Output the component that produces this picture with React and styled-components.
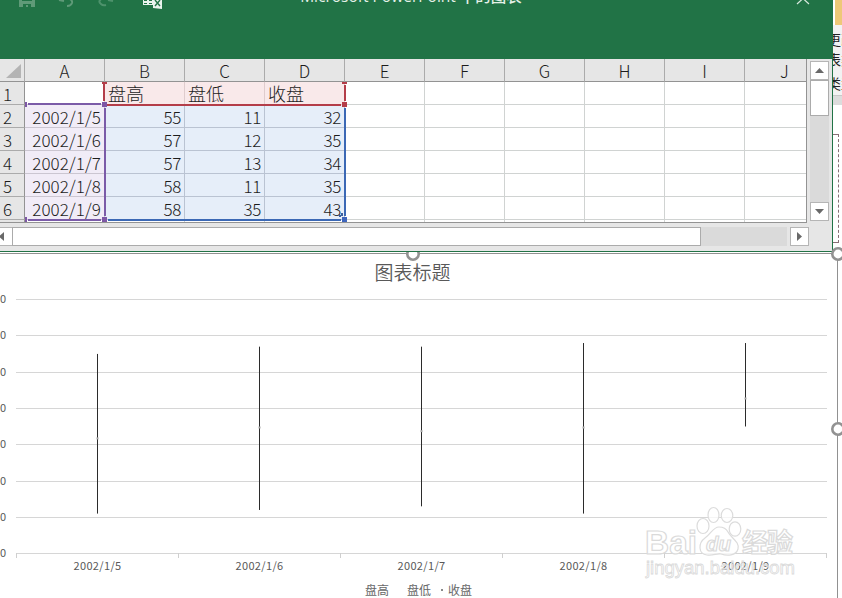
import styled, { createGlobalStyle } from "styled-components";

const GlobalStyle = createGlobalStyle`
  * {
    box-sizing: border-box;
  }

  body {
    margin: 0;
    overflow: hidden;
    background: white;
    font-family: "Noto Sans CJK SC", sans-serif;
  }
`;

const Screen = styled.div`
  display: flex;
  flex-direction: column;
  width: 842px;
  height: 598px;
  overflow: hidden;
  position: relative;
`;

const TopArea = styled.div`
  display: flex;
  height: 252px;
  flex-shrink: 0;
`;

const Workbook = styled.div`
  width: 833px;
  flex-shrink: 0;
  display: flex;
  flex-direction: column;
  background: #e6e6e6;
  border-right: 1px solid #217346;
  border-bottom: 1px solid #217346;
`;

const TitleBar = styled.div`
  height: 59px;
  flex-shrink: 0;
  display: grid;
  grid-template-columns: 170px 482px 1fr;
  background: #217346;
  overflow: hidden;
`;

const WindowTitle = styled.div`
  margin-top: -14px;
  color: #e4f0e8;
  font-family: "Open Sans", "Noto Sans CJK SC", sans-serif;
  font-size: 15.5px;
  font-weight: 500;
  line-height: 20px;
  text-align: center;
  white-space: nowrap;
`;

const SheetArea = styled.div`
  display: flex;
  height: 164px;
`;

const Sheet = styled.div`
  position: relative;
  width: 807px;
  height: 164px;
  overflow: hidden;
  border-right: 1px solid #939393;
  border-bottom: 1px solid #939393;
  background: white;
`;

const SheetRow = styled.div`
  display: grid;
  grid-template-columns: 25px repeat(10, 80px);
  grid-template-rows: 23px;
  height: 23px;
`;

const ColumnHead = styled.div`
  height: 23px;
  border-right: 1px solid ${(props) => (props.$last ? "#e6e6e6" : "#ababab")};
  border-bottom: 1px solid #939393;
  background: #e6e6e6;
  color: #1c1c1c;
  font-size: 17px;
  font-weight: 300;
  line-height: 24px;
  text-align: center;
`;

const Corner = styled(ColumnHead)`
  display: flex;
  justify-content: flex-end;
  padding: 5px 3px 0 0;
`;

const RowHead = styled.div`
  border-right: 1px solid #939393;
  border-bottom: 1px solid #ababab;
  background: #e6e6e6;
  color: #1c1c1c;
  font-size: 17px;
  font-weight: 300;
  line-height: 24px;
  padding-left: 3px;
`;

const fills = {
  none: "white",
  label: "#f9e9ea",
  date: "#f1ecf7",
  value: "#e6eef9",
};

const lines = {
  none: "#d0d3d2",
  label: "#dfcccd",
  date: "#cbc6d1",
  value: "#bac3d2",
};

const spacing = {
  none: 0,
  label: 0,
  date: 0.1,
  value: -0.3,
};

const Cell = styled.div`
  overflow: hidden;
  border-right: 1px solid ${(props) => lines[props.$kind]};
  border-bottom: 1px solid ${(props) => lines[props.$kind]};
  background: ${(props) => fills[props.$kind]};
  color: #1c1c1c;
  font-size: ${(props) => (props.$kind === "label" ? 18 : 17)}px;
  font-weight: 300;
  letter-spacing: ${(props) => spacing[props.$kind]}px;
  line-height: 23px;
  white-space: nowrap;
  text-align: ${(props) => (props.$kind === "label" ? "left" : "right")};
  padding: 0 3px 0 3px;
`;

const Ranges = styled.svg`
  position: absolute;
  top: 0;
  left: 0;
`;

const ScrollColumn = styled.div`
  display: flex;
  flex-direction: column;
  width: 19px;
  height: 160px;
  margin: 2px 0 0 3px;
  background: #dadada;
`;

const ScrollButton = styled.div`
  display: flex;
  align-items: center;
  justify-content: center;
  width: 19px;
  height: 19px;
  flex-shrink: 0;
  border: 1px solid #b5b5b5;
  background: white;
`;

const ScrollRow = styled.div`
  display: flex;
  width: 809px;
  height: 19px;
  margin-top: 4px;
  background: #dadada;
`;

const LeftButton = styled(ScrollButton)`
  width: 12px;
  border-left: 0;
  border-right: 0;
  justify-content: flex-start;
`;

const VerticalThumb = styled.div`
  height: 36px;
  border: 1px solid #ababab;
  background: white;
`;

const HorizontalThumb = styled.div`
  width: 689px;
  border: 1px solid #ababab;
  background: white;
`;

const ScrollGap = styled.div`
  width: ${(props) => props.$width || 19}px;
  height: ${(props) => props.$height || 19}px;
  background: ${(props) => (props.$light ? "#e6e6e6" : "#dadada")};
`;

const SidePane = styled.div`
  flex: 1;
  display: flex;
  flex-direction: column;
  overflow: hidden;
  background: white;
`;

const Swatch = styled.div`
  height: 25px;
  margin-left: 2px;
  flex-shrink: 0;
  background: #eec877;
`;

const RibbonPart = styled.div`
  height: 70px;
  flex-shrink: 0;
  padding-top: 4px;
  background: #f2f2f2;
`;

const RibbonText = styled.div`
  width: 28px;
  height: ${(props) => props.$height}px;
  margin-left: -6px;
  color: #222;
  font-size: 14px;
  line-height: 20px;
  white-space: nowrap;
`;

const RibbonEdge = styled.div`
  height: 10px;
  flex-shrink: 0;
  background: #dcdcdc;
  border-top: 1px solid #c8c8c8;
`;

const Placeholder = styled.div`
  width: 6px;
  height: 109px;
  margin-top: 29px;
  border: 1px dashed #886f76;
  border-left: 0;
`;

const ChartFrame = styled.div`
  flex: 1;
  display: flex;
  flex-direction: column;
  width: 838px;
  margin-top: 1px;
  border-top: 1px solid #919191;
  border-right: 1px solid #919191;
`;

const ChartTitle = styled.div`
  width: 825px;
  height: 37px;
  color: #595959;
  font-size: 19px;
  font-weight: 350;
  line-height: 35px;
  text-align: center;
`;

const Plot = styled.svg`
  display: block;
  flex-shrink: 0;
`;

const Legend = styled.div`
  display: flex;
  height: 20px;
  padding-left: 365px;
  color: #686868;
  font-size: 12px;
  line-height: 18px;
`;

const LegendItem = styled.div`
  display: flex;
  align-items: center;
  gap: 5px;
  width: ${(props) => props.$width}px;
  white-space: nowrap;
`;

const CloseMarker = styled.i`
  width: 2px;
  height: 2px;
  background: #8a8a8a;
`;

const Overlay = styled.svg`
  position: absolute;
  left: ${(props) => props.$left}px;
  top: ${(props) => props.$top}px;
`;

const columns = ["A", "B", "C", "D", "E", "F", "G", "H", "I", "J"];

const rows = [
  ["", "盘高", "盘低", "收盘"],
  ["2002/1/5", 55, 11, 32],
  ["2002/1/6", 57, 12, 35],
  ["2002/1/7", 57, 13, 34],
  ["2002/1/8", 58, 11, 35],
  ["2002/1/9", 58, 35, 43],
];

const cellKind = (row, column) => {
  if (row > 5 || column > 3) return "none";
  if (row === 0) return column === 0 ? "none" : "label";
  return column === 0 ? "date" : "value";
};

const QuickAccess = () => (
  <svg width="170" height="12" fill="none">
    <path d="M19 0H35V7H19Z" fill="#5f9a78" />
    <path d="M22 0H32V1H22ZM23 4H31V7H28V5H26V7H23Z" fill="#217346" />
    <path d="M59 0L64 1M66 -2Q73 -1 72 3Q71 6 67 6" stroke="#5f9a78" strokeWidth="2" />
    <path d="M108 0L113 1M103 -2Q97 1 101 4Q103 6 106 5" stroke="#4e926c" strokeWidth="2" />
    <path d="M143 0H153V5H143Z" fill="#e9f3ed" />
    <path d="M144 0H147V1H144ZM149 0H152V1H149ZM144 3H147V4H144ZM149 3H152V4H149Z" fill="#217346" />
    <path d="M153 -2H162V9L153 8Z" fill="#e9f3ed" />
    <path d="M155 0L160 6M160 0L155 6" stroke="#217346" strokeWidth="1.4" />
  </svg>
);

const SelectionRanges = () => (
  <Ranges width="806" height="163">
    <g fill="none" strokeWidth="2">
      <path d="M104 24V42M106 46H341M345 26V42" stroke="#b43d49" />
      <path d="M28 45H101M105 49V157M28 161H101" stroke="#7b5ba8" />
      <path d="M108 161H341M345 49V157" stroke="#3b68b5" />
    </g>
    <path d="M102 23H107V25H102ZM342 23H347V25H342ZM342 43H347V48H342Z" fill="#b43d49" />
    <path d="M25 43H27V48H25ZM102 43H107V48H102ZM25 158H27V163H25ZM102 158H107V163H102Z" fill="#7e57a5" />
    <path d="M342 158H347V163H342Z" fill="#3d65bd" />
    <path d="M341 154H343V157H341ZM339 156H341V158H339Z" fill="#3b5f9d" />
  </Ranges>
);

const StockChart = () => {
  const toY = (value) => 262.5 - value * 3.6286;
  return (
    <Plot width="836" height="289" fontFamily="Noto Sans CJK SC, sans-serif" fontSize="11" fill="#595959">
      {[0, 10, 20, 30, 40, 50, 60, 70].map((tick) => {
        const y = Math.floor(toY(tick) + 0.1) + 0.5;
        return (
          <g key={tick}>
            <path d={`M16 ${y}H827`} stroke="#d6d6d6" />
            <text x="6" y={y + 3.500} textAnchor="end">
              {tick}
            </text>
          </g>
        );
      })}
      {[16, 178, 340, 502, 664, 826].map((x) => (
        <path key={x} d={`M${x + 0.5} 262V267`} stroke="#cfcfcf" />
      ))}
      {rows.slice(1).map(([date, high, low, close], index) => {
        const x = 97.5 + index * 162;
        return (
          <g key={date}>
            <path d={`M${x} ${toY(high)}V${toY(low)}`} stroke="#2b2b2b" />
            <rect x={x - 1} y={toY(close)} width="2" height="2" fill="#a5a5a5" />
            <text x={x} y="279" textAnchor="middle" letterSpacing="0.35">
              {date}
            </text>
          </g>
        );
      })}
    </Plot>
  );
};

const Handle = ({ x, y }) => (
  <Overlay $left={x - 8} $top={y - 8} width="16" height="16">
    <circle cx="8" cy="8" r="5.7" fill="white" stroke="#929292" strokeWidth="2.6" />
  </Overlay>
);

// The workbook window covers the upper half of this one
const CoveredHandle = () => (
  <Overlay $left={405} $top={252} width="16" height="12">
    <circle cx="8" cy="2" r="5.7" fill="white" stroke="#929292" strokeWidth="2.6" />
  </Overlay>
);

const Watermark = () => (
  <Overlay $left={640} $top={500} width="170" height="85">
    <g fill="white" fillOpacity="0.75" stroke="#dcdcdc" strokeWidth="1.2">
      <ellipse cx="63" cy="26" rx="6" ry="7.5" />
      <ellipse cx="73.5" cy="15" rx="5.5" ry="7.5" />
      <ellipse cx="87" cy="15.5" rx="5.8" ry="7" />
      <ellipse cx="95" cy="29" rx="5.8" ry="7.2" />
      <path d="M79 27C73 27 71 34 65 38C58 43 58 54 67 55C73 56 77 53 81 54C87 56 96 56 98 49C100 42 91 38 88 32C86 28 83 27 79 27Z" />
    </g>
    <g fill="white" fillOpacity="0.75" stroke="#dadada" strokeWidth="1.2" fontWeight="bold">
      <text x="5" y="54" fontFamily="Liberation Sans" fontSize="34" textLength="52" lengthAdjust="spacingAndGlyphs">
        Bai
      </text>
      <text x="66" y="51" fontFamily="Liberation Sans" fontStyle="italic" fontSize="21" textLength="25" lengthAdjust="spacingAndGlyphs">
        du
      </text>
      <text x="102" y="52" fontFamily="Noto Sans CJK SC" fontSize="26" textLength="51">
        经验
      </text>
      <text x="6" y="74" fontFamily="Liberation Sans" fontSize="18" fontWeight="normal" strokeWidth="0.8" fillOpacity="0.5" textLength="149" lengthAdjust="spacingAndGlyphs">
        jingyan.baidu.com
      </text>
    </g>
  </Overlay>
);

const App = () => (
  <>
    <GlobalStyle />
    <Screen>
      <TopArea>
        <Workbook>
          <TitleBar>
            <QuickAccess />
            <WindowTitle>Microsoft PowerPoint 中的图表</WindowTitle>
            <svg width="180" height="10">
              <path d="M145 -7L157 4M157 -7L145 4" stroke="#d8e8de" strokeWidth="1.2" />
            </svg>
          </TitleBar>
          <SheetArea>
            <Sheet>
              <SheetRow>
                <Corner>
                  <svg width="15" height="14">
                    <path d="M15 0V14H0Z" fill="#b4b4b4" />
                  </svg>
                </Corner>
                {columns.map((name) => (
                  <ColumnHead key={name} $last={name === "J"}>
                    {name}
                  </ColumnHead>
                ))}
              </SheetRow>
              {[0, 1, 2, 3, 4, 5, 6].map((row) => (
                <SheetRow key={row}>
                  <RowHead>{row < 6 ? row + 1 : ""}</RowHead>
                  {columns.map((name, column) => (
                    <Cell key={name} $kind={cellKind(row, column)}>
                      {rows[row]?.[column]}
                    </Cell>
                  ))}
                </SheetRow>
              ))}
              <SelectionRanges />
            </Sheet>
            <ScrollColumn>
              <ScrollButton>
                <svg width="9" height="5">
                  <path d="M0 5L4.5 0L9 5Z" fill="#696969" />
                </svg>
              </ScrollButton>
              <VerticalThumb />
              <ScrollGap $height={86} />
              <ScrollButton>
                <svg width="9" height="5">
                  <path d="M0 0L4.5 5L9 0Z" fill="#696969" />
                </svg>
              </ScrollButton>
            </ScrollColumn>
          </SheetArea>
          <ScrollRow>
            <LeftButton>
              <svg width="5" height="9">
                <path d="M4 0V9L-1 4.5Z" fill="#696969" />
              </svg>
            </LeftButton>
            <HorizontalThumb />
            <ScrollGap $width={86} />
            <ScrollGap $width={3} $light />
            <ScrollButton>
              <svg width="5" height="9">
                <path d="M0 0V9L5 4.5Z" fill="#696969" />
              </svg>
            </ScrollButton>
          </ScrollRow>
        </Workbook>
        <SidePane>
          <Swatch />
          <RibbonPart>
            <RibbonText $height={20}>更改</RibbonText>
            <RibbonText $height={24}>表类</RibbonText>
            <RibbonText $height={20}>类型</RibbonText>
          </RibbonPart>
          <RibbonEdge />
          <Placeholder />
        </SidePane>
      </TopArea>
      <ChartFrame>
        <ChartTitle>图表标题</ChartTitle>
        <StockChart />
        <Legend>
          <LegendItem $width={42}>盘高</LegendItem>
          <LegendItem $width={34}>盘低</LegendItem>
          <LegendItem>
            <CloseMarker />
            收盘
          </LegendItem>
        </Legend>
      </ChartFrame>
      <CoveredHandle />
      <Handle x={838} y={254} />
      <Handle x={838} y={429} />
      <Watermark />
    </Screen>
  </>
);

export default App;
